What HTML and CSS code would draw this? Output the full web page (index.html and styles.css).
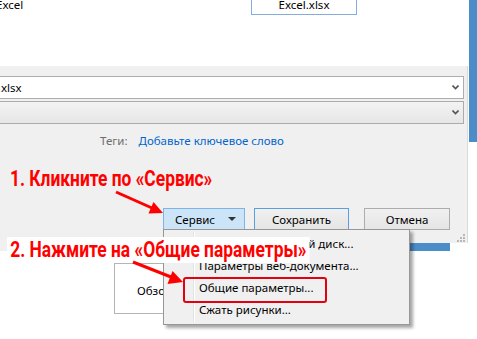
FILE: index.html
```html
<!DOCTYPE html>
<html lang="ru">
<head>
    <meta charset="UTF-8">
    <title>Сохранение документа</title>
    <link rel="stylesheet" href="styles.css">
</head>
<body>
    <div class="screen">
        <div class="dialog">
            <div class="files">
                <div class="file file-plain">Excel</div>
                <div class="file file-selected">Excel.xlsx</div>
            </div>

            <div class="form">
                <div class="field field-name">
                    <span class="field-text">xlsx</span>
                    <svg class="chevron" width="7" height="5" viewBox="0 0 7 5"><polyline points="0.5,0.5 3.5,3.5 6.5,0.5" fill="none" stroke="#555" stroke-width="1.6"/></svg>
                </div>
                <div class="field field-type">
                    <span class="field-text"></span>
                    <svg class="chevron" width="7" height="5" viewBox="0 0 7 5"><polyline points="0.5,0.5 3.5,3.5 6.5,0.5" fill="none" stroke="#555" stroke-width="1.6"/></svg>
                </div>

                <div class="tags">
                    <span class="tags-label">Теги:</span>
                    <span class="tags-link">Добавьте ключевое слово</span>
                </div>

                <div class="buttons">
                    <button class="btn btn-tools">Сервис <span class="caret"></span></button>
                    <button class="btn btn-save">Сохранить</button>
                    <button class="btn btn-cancel">Отмена</button>
                </div>

                <div class="grip-row">
                    <svg width="9" height="9" viewBox="0 0 9 9">
                        <rect x="7" y="1" width="2" height="2" fill="#b8b8b8"/>
                        <rect x="4" y="4" width="2" height="2" fill="#b8b8b8"/>
                        <rect x="7" y="4" width="2" height="2" fill="#b8b8b8"/>
                        <rect x="1" y="7" width="2" height="2" fill="#b8b8b8"/>
                        <rect x="4" y="7" width="2" height="2" fill="#b8b8b8"/>
                        <rect x="7" y="7" width="2" height="2" fill="#b8b8b8"/>
                    </svg>
                </div>
            </div>

            <div class="strip">
                <span class="strip-gray"></span>
                <span class="strip-blue"></span>
            </div>

            <div class="browse">
                <div class="browse-box">Обзор...</div>
            </div>
        </div>

        <div class="side">
            <div class="side-bar"></div>
        </div>

        <!-- Выпадающее меню кнопки «Сервис» -->
        <div class="menu">
            <div class="menu-item">Подключить сетевой диск...</div>
            <div class="menu-item">Параметры веб-документа...</div>
            <div class="menu-item marked">Общие параметры...</div>
            <div class="menu-item">Сжать рисунки...</div>
        </div>

        <!-- Подписи-подсказки -->
        <div class="note note-1">1. Кликните по «Сервис»</div>
        <div class="note note-2">2. Нажмите на «Общие параметры»</div>

        <svg class="arrows" width="477" height="339" viewBox="0 0 477 339">
            <line x1="116" y1="192" x2="152" y2="208" stroke="#f00" stroke-width="3"/>
            <polygon points="163,213 148.5,213.5 153.5,202" fill="#f00"/>
            <line x1="133" y1="262" x2="171" y2="277" stroke="#f00" stroke-width="3"/>
            <polygon points="183,282 167.5,284 172.5,271" fill="#f00"/>
        </svg>
    </div>
</body>
</html>
```

FILE: styles.css
```css
* {
    box-sizing: border-box;
}
body {
    margin: 0;
    width: 477px;
    height: 339px;
    overflow: hidden;
    background: #fff;
    font-family: "Noto Sans", "Open Sans", sans-serif;
    font-size: 11.5px;
    color: #000;
}
.screen {
    position: relative;
    display: flex;
    width: 477px;
    height: 339px;
}
.dialog {
    width: 468px;
    display: flex;
    flex-direction: column;
}
.side {
    width: 9px;
    display: flex;
    justify-content: flex-end;
}
.side-bar {
    width: 8px;
    height: 142px;
    background: #4b8cc9;
}

/* file list */
.files {
    height: 66px;
    display: flex;
    align-items: flex-start;
    overflow: hidden;
}
.file {
    line-height: 16px;
}
.file-plain {
    width: 255px;
    margin-left: -4px;
    margin-top: -3px;
}
.file-selected {
    width: 106px;
    height: 19px;
    margin-top: -4px;
    border: 1px solid #84acdd;
    text-align: center;
}

/* form */
.form {
    height: 177px;
    padding-top: 10px;
    background: #f0f0f0;
    border-right: 1px solid #dadada;
}
.field {
    width: 465px;
    height: 23px;
    margin-left: -1px;
    display: flex;
    align-items: center;
    justify-content: space-between;
    padding: 0 4px 0 1px;
    border: 1px solid #abadb3;
    background: #fff;
}
.field-type {
    margin-top: 2px;
    border-color: #acacac;
    background: linear-gradient(#f3f3f3, #e6e6e6);
}
.tags {
    margin-top: 9px;
    display: flex;
    gap: 11px;
    padding-left: 100px;
    line-height: 16px;
}
.tags-label {
    color: #6d6d6d;
}
.tags-link {
    color: #0066cc;
}
.buttons {
    margin-top: 59px;
    display: flex;
    padding-left: 163px;
}
.btn {
    height: 22px;
    padding: 0;
    font: inherit;
    color: #000;
    border: 1px solid #adadad;
    background: linear-gradient(#f0f0f0, #e5e5e5);
}
.btn-tools {
    width: 82px;
    display: flex;
    align-items: center;
    justify-content: space-between;
    padding: 0 8px 0 11px;
    background: #cce4f7;
    border-color: #7eb4ea;
}
.caret {
    width: 0;
    height: 0;
    border-left: 4px solid transparent;
    border-right: 4px solid transparent;
    border-top: 4px solid #333;
}
.btn-save {
    width: 95px;
    margin-left: 9px;
    border-color: #5a9fe0;
}
.btn-cancel {
    width: 86px;
    margin-left: 15px;
}
.grip-row {
    margin-top: 3px;
    display: flex;
    justify-content: flex-end;
    padding-right: 2px;
}
.grip-row svg {
    display: block;
}

.strip {
    height: 8px;
    display: flex;
}
.strip-gray {
    width: 163px;
    background: #f0f0f0;
}
.strip-blue {
    width: 287px;
    background: #4b8cc9;
}

.browse {
    padding: 12px 0 0 114px;
}
.browse-box {
    width: 90px;
    height: 51px;
    padding: 19px 0 0 22px;
    line-height: 16px;
    border: 1px solid #b4b4b4;
    white-space: nowrap;
    overflow: hidden;
}

/* dropdown */
.menu {
    position: absolute;
    left: 163px;
    top: 229px;
    width: 247px;
    height: 96px;
    padding-top: 3px;
    background: #f0f0f0;
    border: 1px solid #979797;
    box-shadow: 3px 3px 3px rgba(0, 0, 0, 0.35);
}
.menu::before {
    content: "";
    position: absolute;
    left: 29px;
    top: 2px;
    bottom: 2px;
    width: 1px;
    background: #e2e3e3;
    border-right: 1px solid #fff;
}
.menu-item {
    position: relative;
    height: 22px;
    line-height: 22px;
    padding-left: 35px;
}
.menu-item.marked::after {
    content: "";
    position: absolute;
    left: 19px;
    top: 0;
    width: 140px;
    height: 22px;
    border: 2px solid #e3000f;
    border-radius: 3px;
}

/* annotations */
.note {
    position: absolute;
    color: #f00;
    font-family: Roboto, sans-serif;
    font-weight: bold;
    font-size: 22px;
    line-height: 26px;
    white-space: nowrap;
    transform: scaleX(0.79);
    transform-origin: 0 0;
}
.note-1 {
    left: 10px;
    top: 166px;
}
.note-2 {
    left: 7px;
    top: 237px;
    padding: 0 4px 0 4px;
    background: #fff;
}
.arrows {
    position: absolute;
    left: 0;
    top: 0;
    pointer-events: none;
}
```
